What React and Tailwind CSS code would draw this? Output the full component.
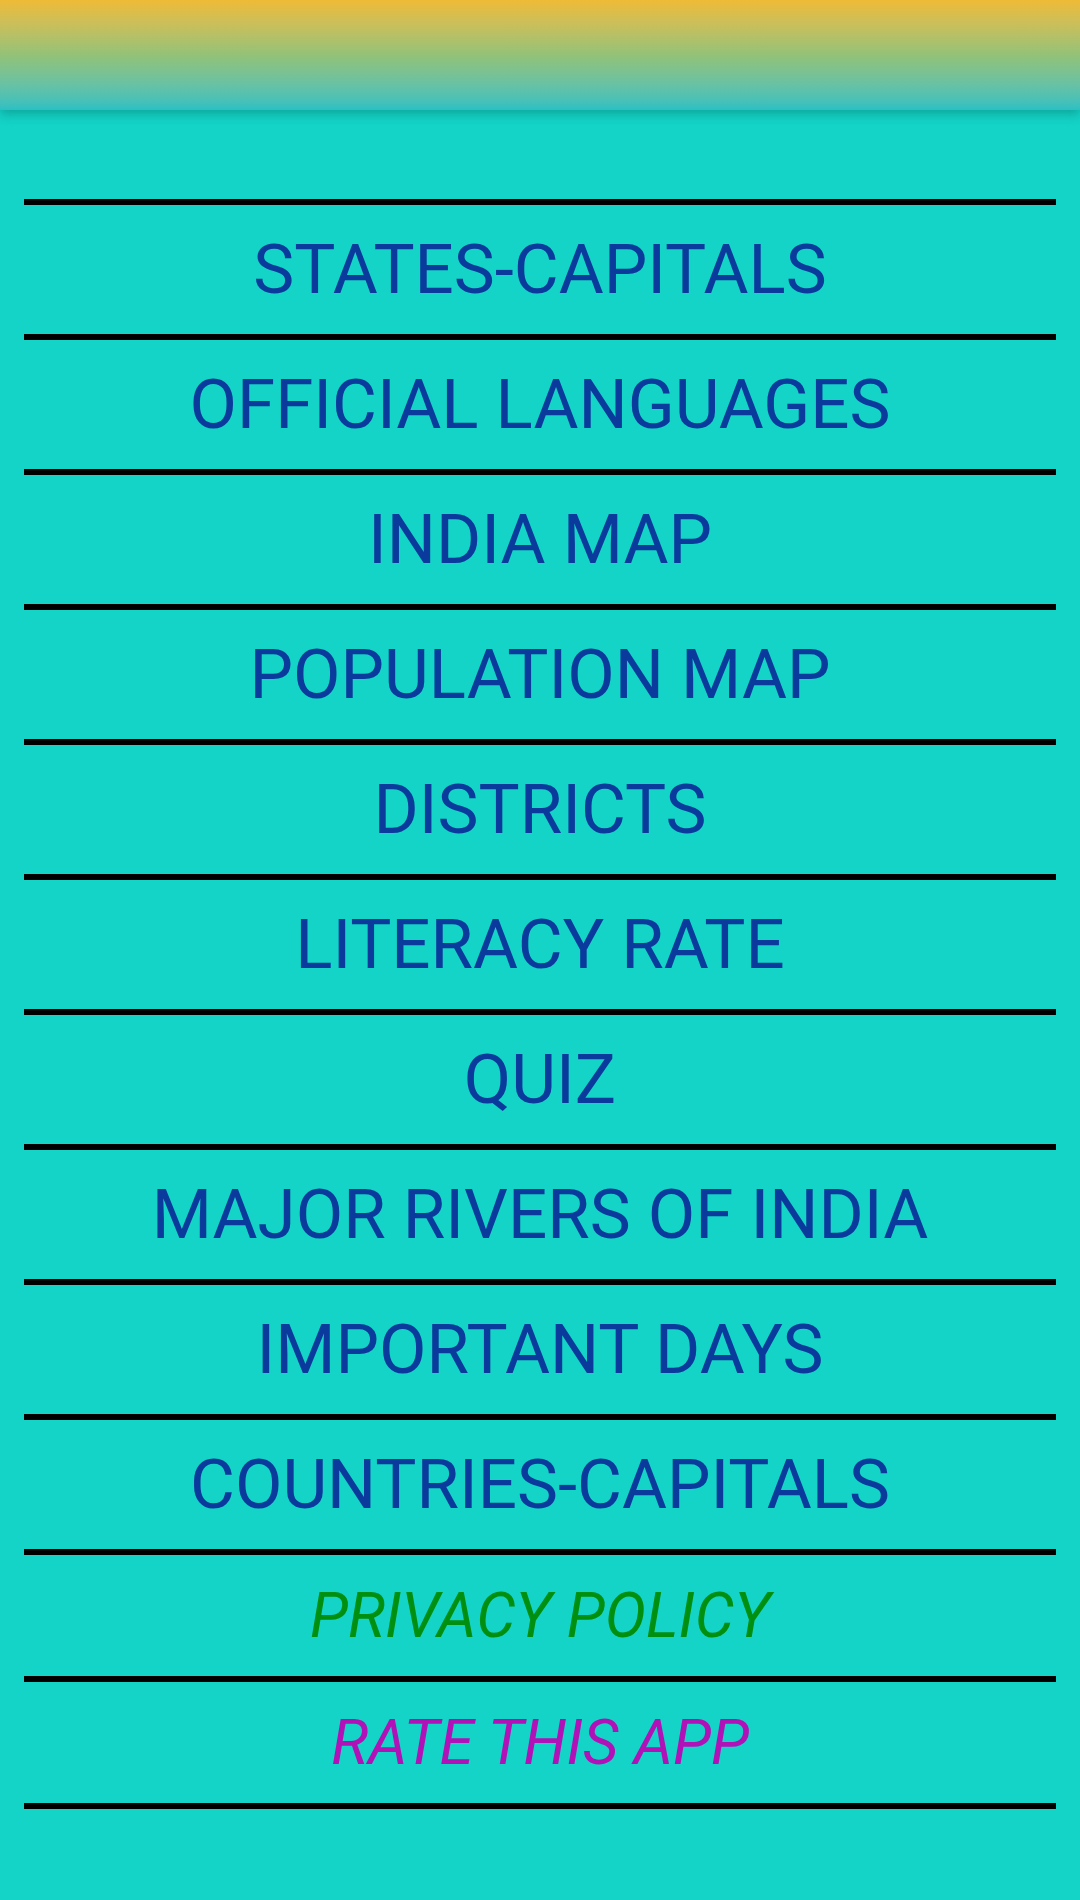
import React from 'react';

const MENU = [
    'STATES-CAPITALS',
    'OFFICIAL LANGUAGES',
    'INDIA MAP',
    'POPULATION MAP',
    'DISTRICTS',
    'LITERACY RATE',
    'QUIZ',
    'MAJOR RIVERS OF INDIA',
    'IMPORTANT DAYS',
    'COUNTRIES-CAPITALS',
];

const Divider = () => <div className="h-[6px] bg-black" />;

const App = () => {
    return (
        <div className="min-h-[1900px] bg-[#14d3c7]" style={{ fontFamily: 'Roboto, "Liberation Sans", sans-serif' }}>
            <div className="h-[110px] bg-gradient-to-b from-[#eebb35] via-[#92c278] to-[#2bc0c3] shadow-[0_4px_10px_rgba(0,80,70,0.35)] relative z-10" />

            <div className="px-[24px] pt-[89px]">
                <Divider />
                {MENU.map((item) => (
                    <React.Fragment key={item}>
                        <div className="h-[129px] flex items-center justify-center text-[69px] leading-none text-[#0a3b9c]">
                            {item}
                        </div>
                        <Divider />
                    </React.Fragment>
                ))}
                <div className="h-[121px] flex items-center justify-center text-[62px] leading-none italic text-[#008f0f]">
                    PRIVACY POLICY
                </div>
                <Divider />
                <div className="h-[121px] flex items-center justify-center text-[62px] leading-none italic text-[#b012b8]">
                    RATE THIS APP
                </div>
                <Divider />
            </div>
        </div>
    );
};

export default App;
